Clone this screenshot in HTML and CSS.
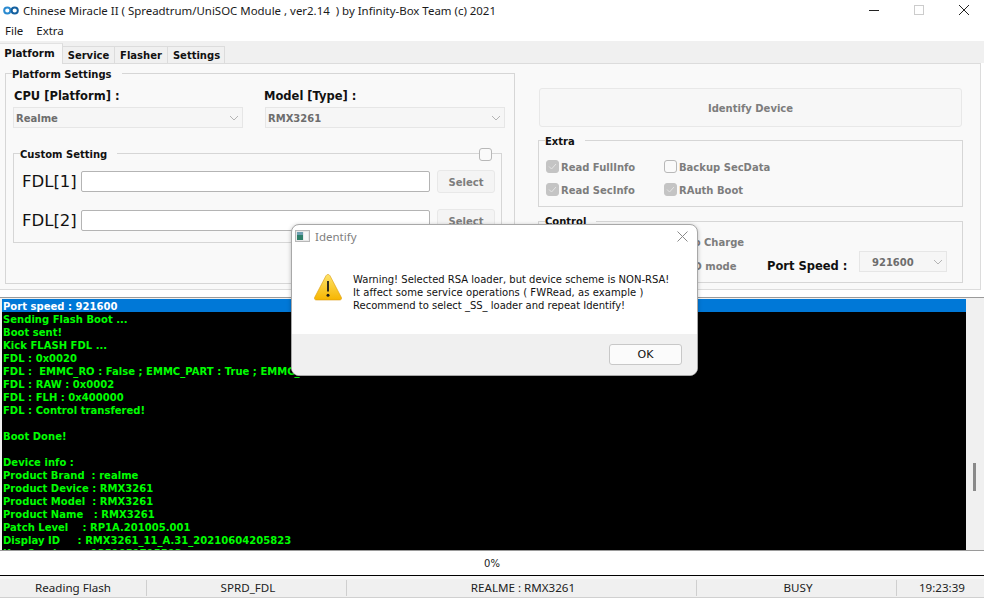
FILE: index.html
```html
<!DOCTYPE html>
<html lang="en">
<head>
<meta charset="utf-8">
<title>Chinese Miracle II</title>
<link rel="stylesheet" href="styles.css">
</head>
<body>
<div class="app">
  <header class="titlebar">
    <svg class="logo" viewBox="0 0 16 9" width="16" height="9"><circle cx="4.3" cy="4.5" r="3.1" fill="none" stroke="#2a8ad0" stroke-width="2"/><circle cx="11.7" cy="4.5" r="3.1" fill="none" stroke="#14609f" stroke-width="2"/></svg>
    <span class="title">Chinese Miracle II ( Spreadtrum/UniSOC Module , ver2.14  ) by Infinity-Box Team (c) 2021</span>
    <div class="winctl">
      <svg width="10" height="10" viewBox="0 0 10 10"><path d="M0 5.5H10" stroke="#222" stroke-width="1"/></svg>
      <svg width="10" height="10" viewBox="0 0 10 10"><rect x=".5" y=".5" width="9" height="9" fill="none" stroke="#ccc"/></svg>
      <svg width="10" height="10" viewBox="0 0 10 10"><path d="M0 0L10 10M10 0L0 10" stroke="#222" stroke-width="1"/></svg>
    </div>
  </header>
  <nav class="menu"><span>File</span><span>Extra</span></nav>
  <div class="tabs">
    <span class="tab active">Platform</span>
    <span class="tab t2">Service</span>
    <span class="tab t3">Flasher</span>
    <span class="tab t4">Settings</span>
  </div>
  <main class="panel">
    <section class="group settings">
      <span class="legend">Platform Settings</span>
      <div class="pick">
        <label class="big">CPU [Platform] :</label>
        <label class="big model">Model [Type] :</label>
        <div class="select"><span>Realme</span><svg class="chev" width="10" height="6" viewBox="0 0 10 6"><path d="M1 1L5 5L9 1" fill="none" stroke="#b4b4b4"/></svg></div>
        <div class="select"><span>RMX3261</span><svg class="chev" width="10" height="6" viewBox="0 0 10 6"><path d="M1 1L5 5L9 1" fill="none" stroke="#b4b4b4"/></svg></div>
      </div>
      <section class="group custom">
        <span class="legend">Custom Setting</span>
        <span class="cb legendcheck"></span>
        <div class="fdl"><span class="fdlname">FDL[1]</span><span class="input"></span><span class="btn">Select</span></div>
        <div class="fdl second"><span class="fdlname">FDL[2]</span><span class="input"></span><span class="btn">Select</span></div>
      </section>
    </section>
    <div class="side">
      <div class="identify">Identify Device</div>
      <section class="group extra">
        <span class="legend">Extra</span>
        <div class="checks">
          <span class="chk"><span class="cb on"><svg width="9" height="7" viewBox="0 0 9 7"><path d="M1 3.5L3.5 6L8 1" fill="none" stroke="#e4e4e4"/></svg></span>Read FullInfo</span>
          <span class="chk"><span class="cb"></span>Backup SecData</span>
          <span class="chk"><span class="cb on"><svg width="9" height="7" viewBox="0 0 9 7"><path d="M1 3.5L3.5 6L8 1" fill="none" stroke="#e4e4e4"/></svg></span>Read SecInfo</span>
          <span class="chk"><span class="cb on"><svg width="9" height="7" viewBox="0 0 9 7"><path d="M1 3.5L3.5 6L8 1" fill="none" stroke="#e4e4e4"/></svg></span>RAuth Boot</span>
        </div>
      </section>
      <section class="group control">
        <span class="legend">Control</span>
        <div class="ctlrow">
          <div class="checks ctlchecks">
            <span class="chk"><span class="cb"></span>Reboot</span>
            <span class="chk autoc"><span class="cb"></span>Auto Charge</span>
            <span class="chk"><span class="cb"></span>Format</span>
            <span class="chk"><span class="cb"></span>SPD mode</span>
          </div>
          <label class="big port">Port Speed :</label>
          <div class="select speed"><span>921600</span><svg class="chev" width="10" height="6" viewBox="0 0 10 6"><path d="M1 1L5 5L9 1" fill="none" stroke="#b4b4b4"/></svg></div>
        </div>
      </section>
    </div>
  </main>
  <section class="logwrap">
    <div class="log">
      <div class="line sel">Port speed : 921600</div>
      <div class="line">Sending Flash Boot ...</div>
      <div class="line">Boot sent!</div>
      <div class="line">Kick FLASH FDL ...</div>
      <div class="line">FDL : 0x0020</div>
      <div class="line">FDL :  EMMC_RO : False ; EMMC_PART : True ; EMMC_USER : True</div>
      <div class="line">FDL : RAW : 0x0002</div>
      <div class="line">FDL : FLH : 0x400000</div>
      <div class="line">FDL : Control transfered!</div>
      <div class="line">&nbsp;</div>
      <div class="line">Boot Done!</div>
      <div class="line">&nbsp;</div>
      <div class="line">Device info :</div>
      <div class="line">Product Brand  : realme</div>
      <div class="line">Product Device : RMX3261</div>
      <div class="line">Product Model  : RMX3261</div>
      <div class="line">Product Name   : RMX3261</div>
      <div class="line">Patch Level    : RP1A.201005.001</div>
      <div class="line">Display ID     : RMX3261_11_A.31_20210604205823</div>
      <div class="line">Key Service    : 1351051715593</div>
    </div>
    <div class="scroll"><span class="thumb"></span></div>
  </section>
  <div class="progress">0%</div>
  <footer class="status">
    <span>Reading Flash</span>
    <span>SPRD_FDL</span>
    <span>REALME : RMX3261</span>
    <span>BUSY</span>
    <span>19:23:39</span>
  </footer>

  <div class="dialog">
    <div class="dlghead">
      <svg width="15" height="12" viewBox="0 0 15 12"><rect x=".5" y=".5" width="14" height="11" fill="#e8e8e8" stroke="#b8b8b8"/><rect x="2" y="2" width="6" height="8" fill="#2f7f6a"/><rect x="2" y="2" width="6" height="3" fill="#6d9fb0"/><rect x="9" y="2" width="4" height="8" fill="#f7f7f7"/></svg>
      <span class="dlgtitle">Identify</span>
      <svg class="dlgclose" width="11" height="11" viewBox="0 0 11 11"><path d="M.5 .5L10.5 10.5M10.5 .5L.5 10.5" stroke="#8a8a8a" stroke-width="1"/></svg>
    </div>
    <div class="dlgbody">
      <svg class="warn" width="28" height="28" viewBox="0 0 28 28">
        <defs><linearGradient id="w" x1="0" y1="0" x2="0" y2="1"><stop offset="0" stop-color="#fde36a"/><stop offset="1" stop-color="#f7b500"/></linearGradient></defs>
        <path d="M14 1.5C15 1.5 15.6 2 16.2 3.1L27.3 24.3C28 25.8 27.2 27 25.6 27H2.4C.8 27 0 25.8.7 24.3L11.8 3.1C12.4 2 13 1.5 14 1.5Z" fill="url(#w)" stroke="#dc9c10" stroke-width=".6"/>
        <path d="M14 8V18.5" stroke="#1a1a1a" stroke-width="1.8"/><circle cx="14" cy="22.3" r="1.5" fill="#1a1a1a"/>
      </svg>
      <div class="dlgtext">
        <div>Warning! Selected RSA loader, but device scheme is NON-RSA!</div>
        <div class="wider">It affect some service operations ( FWRead, as example )</div>
        <div>Recommend to select _SS_ loader and repeat Identify!</div>
      </div>
    </div>
    <div class="dlgfoot"><span class="ok">OK</span></div>
  </div>
</div>
</body>
</html>
```
FILE: styles.css
```css
* { box-sizing: border-box; }
html, body { margin: 0; padding: 0; }
body { background: #fff; overflow: hidden; }
.app {
  position: relative;
  width: 984px;
  height: 598px;
  display: flex;
  flex-direction: column;
  font-family: "DejaVu Sans", sans-serif;
  font-size: 10px;
  color: #000;
  overflow: hidden;
}
.titlebar {
  height: 20px;
  display: flex;
  align-items: center;
  padding-left: 3px;
  flex: none;
}
.logo { margin-right: 4px; }
.title {
  font-family: "Noto Sans", sans-serif;
  font-size: 11.45px;
  white-space: pre;
  color: #1a1a1a;
}
.winctl {
  margin-left: auto;
  display: flex;
  gap: 35px;
  padding-right: 15px;
}
.menu {
  height: 21px;
  flex: none;
  display: flex;
  align-items: center;
  gap: 13px;
  padding-left: 5px;
  font-family: "Noto Sans", sans-serif;
  font-size: 11.45px;
  color: #1a1a1a;
}
.tabs {
  height: 22px;
  flex: none;
  background: #f0f0f0;
  display: flex;
  align-items: flex-end;
  padding-top: 2px;
  position: relative;
  z-index: 1;
}
.tab {
  height: 17px;
  line-height: 18px;
  font-weight: 700;
  font-size: 10px;
  text-align: center;
  background: #f0f0f0;
  border: 1px solid #dcdcdc;
  border-bottom: 0;
  border-left: 0;
  color: #111;
}
.tab.active {
  width: 63px;
  height: 21px;
  line-height: 18px;
  background: #f9f9f9;
  font-size: 10.3px;
  padding-right: 3px;
  margin-bottom: -1px;
  border-top-color: #e2e2e2;
}
.t2 { width: 52px; }
.t3 { width: 53px; }
.t4 { width: 57px; padding-left: 1px; }
.panel {
  height: 227px;
  width: 981px;
  flex: none;
  background: #f9f9f9;
  border: 1px solid #dcdcdc;
  border-left: 0;
  display: flex;
  align-items: flex-start;
}
.group {
  border: 1px solid #d6d6d6;
  position: relative;
}
.legend {
  display: block;
  width: fit-content;
  height: 13px;
  margin-top: -7px;
  margin-left: 6px;
  padding-right: 10px;
  background: #f9f9f9;
  font-weight: 700;
  font-size: 10px;
  line-height: 15px;
  color: #111;
  white-space: nowrap;
}
.settings {
  width: 510px;
  height: 211px;
  margin: 9px 0 0 5px;
}
.pick {
  display: grid;
  grid-template-columns: 230px 240px;
  column-gap: 22px;
  padding: 9px 0 0 7px;
}
.big {
  font-weight: 700;
  font-size: 11.5px;
  line-height: 14px;
  padding-left: 1px;
  margin-bottom: 4px;
  color: #111;
  white-space: nowrap;
}
.big.model { margin-left: -2px; }
.select {
  height: 21px;
  background: #f6f6f6;
  border: 1px solid #e6e6e6;
  font-weight: 700;
  font-size: 10px;
  color: #6d6d6d;
  padding: 0 3px 0 2px;
  display: flex;
  align-items: center;
  justify-content: space-between;
}
.select span { padding-top: 2px; }
.custom {
  width: 489px;
  height: 90px;
  margin: 25px 0 0 7px;
}
.legendcheck {
  position: absolute;
  left: 465px;
  top: -6px;
}
.fdl {
  display: flex;
  align-items: center;
  height: 23px;
  margin-top: 10px;
  padding-left: 8px;
}
.fdl.second { margin-top: 16px; }
.fdlname {
  width: 59px;
  flex: none;
  font-size: 16.5px;
  color: #111;
}
.input {
  width: 349px;
  height: 21px;
  flex: none;
  background: #fff;
  border: 1px solid #b4b4b4;
  border-radius: 2px;
}
.btn {
  width: 58px;
  height: 23px;
  flex: none;
  margin-left: 7px;
  background: #f4f4f4;
  border: 1px solid #e8e8e8;
  border-radius: 3px;
  font-weight: 700;
  font-size: 10px;
  line-height: 23px;
  text-align: center;
  color: #7d7d7d;
}
.side {
  width: 425px;
  margin: 24px 0 0 23px;
}
.identify {
  width: 423px;
  height: 39px;
  margin-left: 1px;
  background: #f7f7f7;
  border: 1px solid #e8e8e8;
  border-radius: 3px;
  text-align: center;
  font-weight: 700;
  font-size: 10px;
  line-height: 39px;
  color: #7d7d7d;
}
.extra {
  height: 67px;
  margin-top: 13px;
}
.checks {
  display: grid;
  grid-template-columns: 118px auto;
  row-gap: 10px;
  padding: 13px 0 0 7px;
}
.chk {
  display: flex;
  align-items: center;
  gap: 2px;
  height: 13px;
  padding-top: 2px;
  font-weight: 700;
  font-size: 10px;
  color: #7d7d7d;
  white-space: nowrap;
}
.chk .cb { margin-top: -2px; }
.autoc { margin-left: -5px; }
.cb {
  width: 13px;
  height: 13px;
  flex: none;
  background: #fafafa;
  border: 1px solid #b8b8b8;
  border-radius: 3px;
  display: inline-flex;
  align-items: center;
  justify-content: center;
}
.cb.on {
  background: #c4c4c4;
  border-color: #c4c4c4;
}
.control {
  height: 62px;
  margin-top: 14px;
}
.control .legend {
  margin-top: -8px;
  margin-bottom: 1px;
}
.ctlrow {
  display: flex;
  align-items: flex-end;
}
.ctlchecks {
  width: 228px;
  flex: none;
  row-gap: 11px;
  padding: 7px 0 4px 7px;
}
.port {
  width: 92px;
  flex: none;
  margin-bottom: 3px;
  padding-left: 0;
}
.speed {
  width: 88px;
  flex: none;
  margin-bottom: 4px;
  padding-left: 12px;
}
.logwrap {
  margin-top: 7px;
  height: 254px;
  flex: none;
  display: flex;
  background: #f0f0f0;
  border-top: 1px solid #9a9a9a;
  border-bottom: 1px solid #9a9a9a;
}
.log {
  width: 964px;
  flex: none;
  margin: 1px 0 0 2px;
  background: #000;
  overflow: hidden;
  font-weight: 700;
  font-size: 10px;
  letter-spacing: .03px;
  color: #00ff00;
}
.line {
  height: 13px;
  line-height: 15px;
  padding-left: 1px;
  white-space: pre;
}
.line.sel {
  background: #0078d7;
  color: #fff;
}
.scroll { flex: 1; display: flex; }
.thumb {
  width: 3px;
  height: 28px;
  margin: 165px 0 0 7px;
  background: #8a8a8a;
}
.progress {
  height: 25px;
  flex: none;
  background: #fff;
  border-bottom: 1px solid #000;
  text-align: center;
  line-height: 25px;
  font-size: 10px;
  color: #222;
}
.status {
  flex: 1;
  display: grid;
  grid-template-columns: 147px 200px 350px 200px 87px;
  align-items: center;
  background: #f0f0f0;
  border-top: 3px solid #f7f7f7;
  border-bottom: 1px solid #d0d0d0;
  font-family: "Noto Sans", sans-serif;
  font-size: 11.6px;
  color: #222;
}
.status span {
  height: 16px;
  line-height: 16px;
  padding-left: 3px;
  text-align: center;
  border-right: 1px solid #cfcfcf;
}
.status span:first-child { padding-left: 0; }
.status span:last-child { border-right: 0; }
.dialog {
  position: absolute;
  left: 291px;
  top: 224px;
  width: 407px;
  height: 152px;
  background: #fff;
  border: 1px solid #a8a8a8;
  border-radius: 8px;
  box-shadow: 0 1px 4px rgba(0,0,0,.25);
  display: flex;
  flex-direction: column;
  overflow: hidden;
  z-index: 5;
}
.dlghead {
  height: 22px;
  flex: none;
  display: flex;
  align-items: center;
  padding: 0 9px 0 3px;
}
.dlgtitle {
  margin-left: 5px;
  font-family: "Noto Sans", sans-serif;
  font-size: 11.5px;
  color: #808080;
}
.dlgclose { margin-left: auto; }
.dlgbody {
  flex: 1;
  display: flex;
  align-items: flex-start;
  padding: 26px 0 0 22px;
}
.dlgtext {
  margin-left: 11px;
  font-size: 10px;
  line-height: 13px;
  color: #111;
  white-space: nowrap;
}
.wider { letter-spacing: .07px; }
.dlgfoot {
  height: 41px;
  flex: none;
  background: #f0f0f0;
  display: flex;
  justify-content: flex-end;
  padding: 10px 15px 0 0;
}
.ok {
  width: 73px;
  height: 21px;
  background: #fbfbfb;
  border: 1px solid #c8c8c8;
  border-radius: 3px;
  text-align: center;
  line-height: 19px;
  font-size: 11px;
  color: #111;
}
```
